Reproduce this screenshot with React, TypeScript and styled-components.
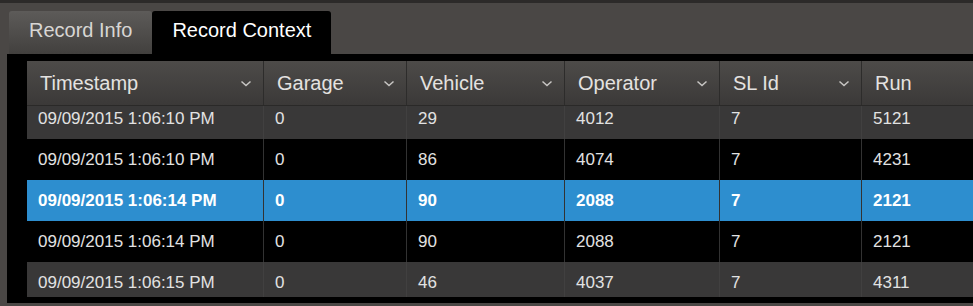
import styled, { createGlobalStyle } from 'styled-components';

const GlobalStyle = createGlobalStyle`
  html, body {
    margin: 0;
    padding: 0;
    background: #4a4745;
  }
  body {
    font-family: 'Liberation Sans', Arial, sans-serif;
  }
`;

const columns = [
  { key: 'timestamp', title: 'Timestamp', width: 237 },
  { key: 'garage', title: 'Garage', width: 143 },
  { key: 'vehicle', title: 'Vehicle', width: 158 },
  { key: 'operator', title: 'Operator', width: 155 },
  { key: 'slId', title: 'SL Id', width: 142 },
  { key: 'run', title: 'Run', width: 120 },
];

const rows: any[] = [
  { timestamp: '09/09/2015 1:06:10 PM', garage: '0', vehicle: '29', operator: '4012', slId: '7', run: '5121' },
  { timestamp: '09/09/2015 1:06:10 PM', garage: '0', vehicle: '86', operator: '4074', slId: '7', run: '4231' },
  { timestamp: '09/09/2015 1:06:14 PM', garage: '0', vehicle: '90', operator: '2088', slId: '7', run: '2121', selected: true },
  { timestamp: '09/09/2015 1:06:14 PM', garage: '0', vehicle: '90', operator: '2088', slId: '7', run: '2121' },
  { timestamp: '09/09/2015 1:06:15 PM', garage: '0', vehicle: '46', operator: '4037', slId: '7', run: '4311' },
];

const Page = styled.div`
  width: 973px;
  height: 306px;
  overflow: hidden;
  background: #4a4745;
  border-top: 3px solid #2c2a29;
  box-sizing: border-box;
  display: flex;
  flex-direction: column;
`;

const TabStrip = styled.div`
  display: flex;
  align-items: flex-end;
  height: 51px;
  padding-left: 9px;
  box-sizing: border-box;
`;

const Tab = styled.div<{ active?: boolean }>`
  height: 43px;
  display: flex;
  align-items: center;
  padding: 0 20px 4px;
  font-size: 20px;
  color: ${(p) => (p.active ? '#ffffff' : '#d8d6d4')};
  background: ${(p) =>
    p.active ? '#000' : 'linear-gradient(#5d5b59, #42403e)'};
  border-top-left-radius: 3px;
  border-top-right-radius: 3px;
  box-sizing: border-box;
`;

const Panel = styled.div`
  margin-left: 7px;
  height: 249px;
  background: #000;
  padding: 7px 0 6px 20px;
  box-sizing: border-box;
  display: flex;
  flex-direction: column;
`;

const HeaderRow = styled.div`
  display: flex;
  height: 45px;
  flex-shrink: 0;
  background: linear-gradient(#4d4b49, #3b3938);
  border-bottom: 1px solid #2a2928;
  box-sizing: border-box;
`;

const HeaderCell = styled.div<{ w: number }>`
  width: ${(p) => p.w}px;
  flex-shrink: 0;
  display: flex;
  align-items: center;
  justify-content: space-between;
  padding: 0 11px 0 13px;
  box-sizing: border-box;
  border-right: 1px solid #2d2c2b;
  font-size: 20px;
  color: #e4e2e0;
`;

const Chevron = styled.svg`
  width: 12px;
  height: 7px;
  flex-shrink: 0;
`;

const Body = styled.div`
  flex: 1;
  overflow: hidden;
`;

const Rows = styled.div`
  margin-top: -8px;
`;

const Row = styled.div<{ tone: string }>`
  display: flex;
  height: 41px;
  background: ${(p) =>
    p.tone === 'selected' ? '#2d8ecf' : p.tone === 'alt' ? '#393838' : '#000'};
  color: ${(p) => (p.tone === 'selected' ? '#ffffff' : '#e2e2e2')};
  font-weight: ${(p) => (p.tone === 'selected' ? 'bold' : 'normal')};
`;

const Cell = styled.div<{ w: number; dim?: boolean }>`
  width: ${(p) => p.w}px;
  flex-shrink: 0;
  display: flex;
  align-items: center;
  padding-left: 11px;
  box-sizing: border-box;
  border-right: 1px solid ${(p) => (p.dim ? '#414040' : '#323232')};
  font-size: 17px;
`;

export default function App() {
  return (
    <>
      <GlobalStyle />
      <Page>
        <TabStrip>
          <Tab>Record Info</Tab>
          <Tab active>Record Context</Tab>
        </TabStrip>
        <Panel>
          <HeaderRow>
            {columns.map((c) => (
              <HeaderCell key={c.key} w={c.width}>
                {c.title}
                {c.key !== 'run' && (
                  <Chevron viewBox="0 0 12 7">
                    <polyline
                      points="1.5,1.5 6,5.5 10.5,1.5"
                      fill="none"
                      stroke="#c8c6c4"
                      strokeWidth="1.5"
                    />
                  </Chevron>
                )}
              </HeaderCell>
            ))}
          </HeaderRow>
          <Body>
            <Rows>
              {rows.map((r, i) => {
                const tone = r.selected ? 'selected' : i % 2 === 0 ? 'alt' : 'plain';
                return (
                  <Row key={i} tone={tone}>
                    {columns.map((c) => (
                      <Cell key={c.key} w={c.width} dim={tone === 'alt'}>
                        {r[c.key]}
                      </Cell>
                    ))}
                  </Row>
                );
              })}
            </Rows>
          </Body>
        </Panel>
      </Page>
    </>
  );
}
